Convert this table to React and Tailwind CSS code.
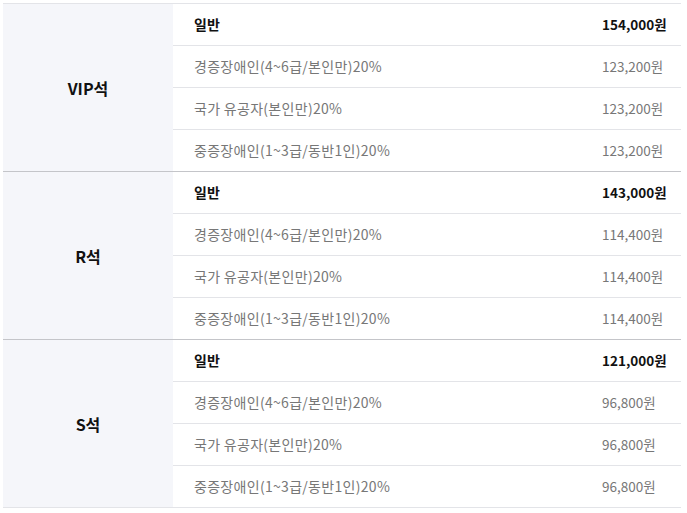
const sections = [
  {
    name: "VIP석",
    rows: [
      { label: "일반", price: "154,000원", strong: true },
      { label: "경증장애인(4~6급/본인만)20%", price: "123,200원" },
      { label: "국가 유공자(본인만)20%", price: "123,200원" },
      { label: "중증장애인(1~3급/동반1인)20%", price: "123,200원" },
    ],
  },
  {
    name: "R석",
    rows: [
      { label: "일반", price: "143,000원", strong: true },
      { label: "경증장애인(4~6급/본인만)20%", price: "114,400원" },
      { label: "국가 유공자(본인만)20%", price: "114,400원" },
      { label: "중증장애인(1~3급/동반1인)20%", price: "114,400원" },
    ],
  },
  {
    name: "S석",
    rows: [
      { label: "일반", price: "121,000원", strong: true },
      { label: "경증장애인(4~6급/본인만)20%", price: "96,800원" },
      { label: "국가 유공자(본인만)20%", price: "96,800원" },
      { label: "중증장애인(1~3급/동반1인)20%", price: "96,800원" },
    ],
  },
]

export default function App() {
  return (
    <div
      className="w-[687px] h-[513px] bg-white pt-[3px] pl-[3px]"
      style={{ fontFamily: '"Noto Sans CJK KR", "Noto Sans", sans-serif' }}
    >
      <div className="w-[678px] border-t border-[#e3e4e8]">
        {sections.map((sec, i) => (
          <div
            key={sec.name}
            className={`flex border-b ${i < sections.length - 1 ? "border-[#c4c5c9]" : "border-[#e3e4e8]"}`}
          >
            <div className="w-[170px] bg-[#f5f6fa] flex items-center justify-center font-bold text-[#111] text-[16px]">
              {sec.name}
            </div>
            <div className="flex-1">
              {sec.rows.map((row, j) => (
                <div
                  key={j}
                  className={`flex items-center ${j < sec.rows.length - 1 ? "h-[42px] border-b border-[#e3e4e8]" : "h-[41px]"}`}
                >
                  <div
                    className={`pl-[21px] w-[429px] ${row.strong ? "font-bold text-[#111] text-[14px]" : "text-[#777] text-[14px] tracking-[0.3px]"}`}
                  >
                    {row.label}
                  </div>
                  <div className={`text-[13.5px] ${row.strong ? "font-bold text-[#111]" : "text-[#777]"}`}>
                    {row.price}
                  </div>
                </div>
              ))}
            </div>
          </div>
        ))}
      </div>
    </div>
  )
}
